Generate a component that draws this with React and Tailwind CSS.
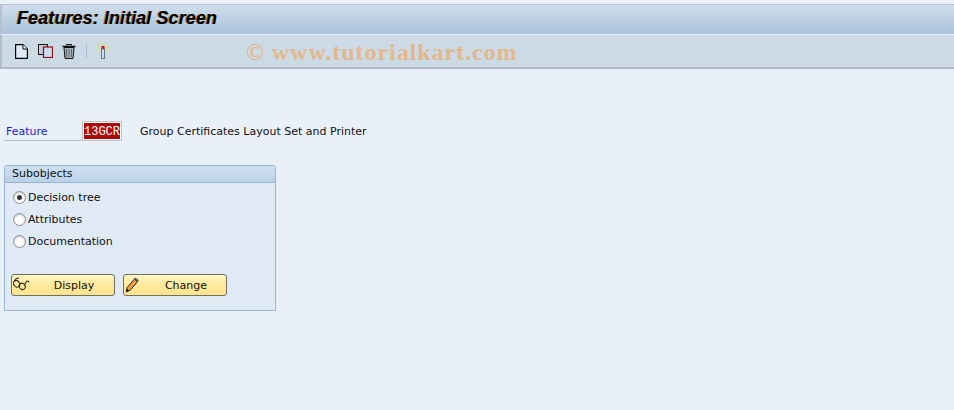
const uiFont = { fontFamily: '"DejaVu Sans", sans-serif' };

function DocIcon() {
  return (
    <svg width="13" height="15" viewBox="0 0 13 15">
      <path d="M0.6 0.6H8L12.4 5V14.4H0.6Z" fill="#deebf7" stroke="#000" strokeWidth="1.2" />
      <path d="M8 0.6V5H12.4" fill="#fff" stroke="#000" />
    </svg>
  );
}

function CopyIcon() {
  return (
    <svg width="15" height="14" viewBox="0 0 15 14">
      <rect x="0.5" y="0.5" width="9" height="10" fill="#c8ccd0" stroke="#111" />
      <rect x="5.5" y="3" width="9" height="10.5" fill="#c9dcf0" stroke="#8f0f0f" strokeWidth="1.2" />
    </svg>
  );
}

function TrashIcon() {
  return (
    <svg width="14" height="15" viewBox="0 0 14 15">
      <path d="M0.5 2.5H13.5" stroke="#111" strokeWidth="1.6" />
      <path d="M4.5 1.5V0.5H9.5V1.5" fill="none" stroke="#111" />
      <path d="M2 3.5L3 14.5H11L12 3.5Z" fill="#a8b0b8" stroke="#111" />
      <path d="M4.5 5V13M7 5V13M9.5 5V13" stroke="#5b6470" />
    </svg>
  );
}

function WandIcon() {
  return (
    <svg width="12" height="16" viewBox="0 0 12 16">
      <path d="M1 1L3 3M11 1L9 3M0 5H2.5M12 5H9.5M1 9L3 7M11 9L9 7M6 0V2" stroke="#f5e60f" />
      <rect x="4.5" y="3" width="3" height="3" fill="#d40f20" />
      <rect x="4.5" y="6" width="3" height="9.5" fill="#d3dbe4" stroke="#68788c" />
    </svg>
  );
}

function GlassesIcon() {
  return (
    <svg width="17" height="14" viewBox="0 0 17 14" fill="none" stroke="#2a2a2a" strokeWidth="1.1">
      <ellipse cx="3.6" cy="6.8" rx="2.9" ry="3.5" transform="rotate(-35 3.6 6.8)" />
      <ellipse cx="9.2" cy="9.4" rx="2.8" ry="3.3" transform="rotate(-35 9.2 9.4)" />
      <path d="M1.5 4.5C2 2.5 3.5 1 6 1M6 7.5L7 7.5M11.5 8.5C12.5 6 13 4 14.5 4C15.5 4 16 4.5 16 5.5" />
    </svg>
  );
}

function PencilIcon() {
  return (
    <svg width="14" height="16" viewBox="0 0 14 16">
      <path d="M1.2 14.8L2.2 10.5L9.5 2L12.6 4.6L5 13.4Z" fill="#f0a040" stroke="#222" />
      <path d="M9.5 2L10.5 1L13.2 3.4L12.6 4.6Z" fill="#bcd0e4" stroke="#222" />
      <path d="M1.2 14.8L2.2 11.8L4 13.5Z" fill="#111" />
    </svg>
  );
}

function Radio({ checked, label }) {
  return (
    <div className="flex items-center h-[22px] pl-[8px] text-[11px] text-[#111]">
      <span className="w-[13px] h-[13px] mb-px rounded-full border border-[#8b8f94] bg-white flex items-center justify-center shadow-[inset_0_1px_2px_#b8bcc2]">
        {checked && <span className="w-[5px] h-[5px] rounded-full bg-[#333]" />}
      </span>
      <span className="ml-[2px]">{label}</span>
    </div>
  );
}

function SapButton({ icon, label }) {
  return (
    <button className="relative w-[104px] h-[22px] rounded-[3px] border border-[#6f6f62] bg-gradient-to-b from-[#fff6c4] via-[#ffe99a] to-[#fde38e] text-[11px] text-[#111] flex items-center justify-center pl-[22px] pt-[2px]">
      <span className="absolute left-[1px] top-[2px]">{icon}</span>
      {label}
    </button>
  );
}

export default function App() {
  return (
    <div style={uiFont} className="relative w-[954px] h-[410px] overflow-hidden bg-[#e9f0f8] pt-[4px]">
      {/* title bar */}
      <div className="h-[31px] border-l-2 border-t border-[#b6c2cf] bg-gradient-to-b from-[#cfdeec] to-[#abc2da] border-b-[#e8f0f7] border-b flex items-center pl-[15px] pb-[2px]">
        <h1 className="font-['Liberation_Sans'] font-bold italic text-[18.2px] text-black [text-shadow:-1px_0_0_#a9772f]">
          Features: Initial Screen
        </h1>
      </div>

      {/* toolbar */}
      <div className="h-[34px] border-l-2 border-b-2 border-[#b0bccb] bg-[#ccdae6] flex items-center pl-[13px]">
        <DocIcon />
        <span className="ml-[10px]"><CopyIcon /></span>
        <span className="ml-[9px]"><TrashIcon /></span>
        <span className="ml-[10px] w-px h-[14px] bg-[#a9bfd5]" />
        <span className="ml-[10px]"><WandIcon /></span>
      </div>

      {/* watermark */}
      <div className="absolute left-[246px] top-[34px] font-['Liberation_Serif'] font-bold text-[24px] tracking-[0.95px] text-[#e3b88c]">
        © www.tutorialkart.com
      </div>

      {/* feature row */}
      <div className="mt-[52px] ml-[4px] flex items-center h-[20px]">
        <span className="w-[78px] h-[20px] leading-[21px] pl-[2px] border-b border-[#b6bfc9] text-[11px] text-[#1a1ae0]">Feature</span>
        <span className="w-[40px] h-[20px] border border-[#c3c3c3] bg-white p-px">
          <span className="block h-full bg-[#b00b0b] text-white font-['Liberation_Mono'] text-[12px] leading-[19px] text-center">13GCR</span>
        </span>
        <span className="ml-[18px] pt-[2px] text-[11px] text-[#111]">Group Certificates Layout Set and Printer</span>
      </div>

      {/* subobjects box */}
      <div className="mt-[24px] ml-[4px] w-[272px] h-[146px] border border-[#97b4d2] rounded-t-[3px] bg-[#dfeaf5]">
        <div className="h-[17px] pl-[7px] leading-[15px] text-[11px] text-[#111] bg-gradient-to-b from-[#cfe0f0] to-[#b9d2e9] border-b border-[#97b4d2]">Subobjects</div>
        <div className="mt-[4px]">
          <Radio checked label="Decision tree" />
          <Radio label="Attributes" />
          <Radio label="Documentation" />
        </div>
        <div className="mt-[21px] ml-[6px] flex gap-[8px]">
          <SapButton icon={<GlassesIcon />} label="Display" />
          <SapButton icon={<PencilIcon />} label="Change" />
        </div>
      </div>
    </div>
  );
}
